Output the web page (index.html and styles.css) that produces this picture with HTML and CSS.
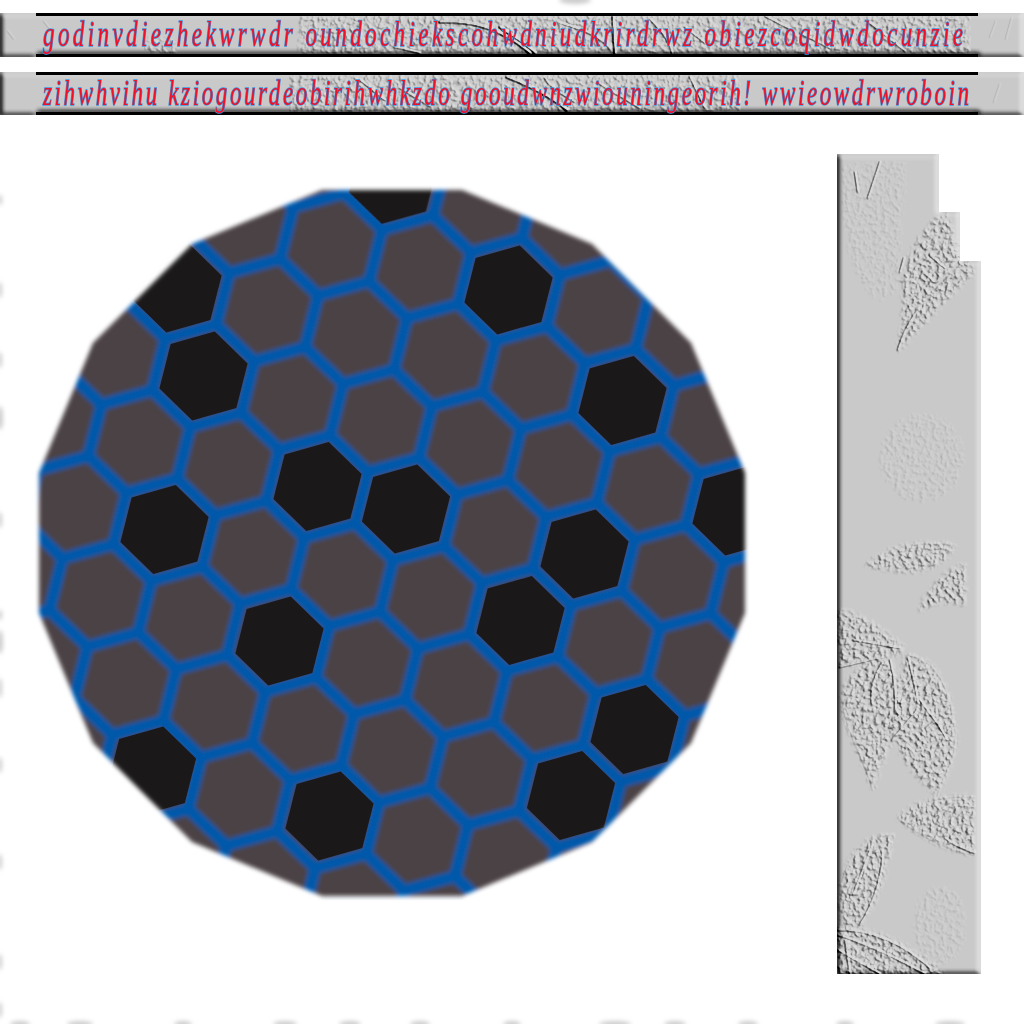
FILE: index.html
```html
<!DOCTYPE html>
<html lang="en">
<head>
<meta charset="utf-8">
<title>Hex panel</title>
<link rel="stylesheet" href="styles.css">
</head>
<body>
<svg class="defs" width="0" height="0" aria-hidden="true">
  <defs>
    <filter id="light" x="-5%" y="-5%" width="110%" height="110%" color-interpolation-filters="sRGB">
      <feGaussianBlur in="SourceAlpha" stdDeviation="0.7" result="h"/>
      <feDiffuseLighting in="h" surfaceScale="5" diffuseConstant="1.03" lighting-color="#ffffff">
        <feDistantLight azimuth="330" elevation="50"/>
      </feDiffuseLighting>
      <feComponentTransfer>
        <feFuncR type="table" tableValues="0 0.2 0.4 0.6 0.8 0.87"/>
        <feFuncG type="table" tableValues="0 0.2 0.4 0.6 0.8 0.87"/>
        <feFuncB type="table" tableValues="0 0.2 0.4 0.6 0.8 0.87"/>
      </feComponentTransfer>
    </filter>
    <filter id="edge" x="-5%" y="-5%" width="110%" height="110%">
      <feGaussianBlur stdDeviation="2.4"/>
    </filter>
    <filter id="bump" x="0" y="0" width="100%" height="100%" color-interpolation-filters="sRGB">
      <feGaussianBlur in="SourceAlpha" stdDeviation="2.5" result="m"/>
      <feTurbulence type="fractalNoise" baseFrequency="0.24" numOctaves="2" seed="7" result="n"/>
      <feColorMatrix in="n" type="matrix" values="0 0 0 0 0  0 0 0 0 0  0 0 0 0 0  0 0 0 2.6 -1.1" result="a"/>
      <feComposite in="a" in2="m" operator="in"/>
    </filter>
    <filter id="soft" x="-2%" y="-2%" width="104%" height="104%">
      <feGaussianBlur stdDeviation="2.2"/>
    </filter>
    <filter id="rim" x="-2%" y="-2%" width="104%" height="104%">
      <feGaussianBlur stdDeviation="2.2"/>
    </filter>
    <filter id="smudge" x="-5%" y="-5%" width="110%" height="110%">
      <feGaussianBlur stdDeviation="2"/>
    </filter>
    <pattern id="comb" patternUnits="userSpaceOnUse" width="91.7" height="158.8" patternTransform="translate(406 509) rotate(14.2)">
      <rect class="comb-line" width="91.7" height="158.8"/>
      <polygon id="cell" class="comb-cell" points="0,-45.8 39.66,-22.9 39.66,22.9 0,45.8 -39.66,22.9 -39.66,-22.9"/>
      <use href="#cell" x="91.7"/>
      <use href="#cell" y="158.8"/>
      <use href="#cell" x="91.7" y="158.8"/>
      <use href="#cell" x="45.85" y="79.4"/>
    </pattern>
    <polygon id="dark" class="comb-dark" transform="rotate(14.2)" points="0,-45.8 39.66,-22.9 39.66,22.9 0,45.8 -39.66,22.9 -39.66,-22.9"/>
    <mask id="disc" maskUnits="userSpaceOnUse" x="0" y="154" width="837" height="820">
      <polygon class="disc-shape" filter="url(#rim)" points="322,190 462,190 592,244 691,343 745,473 745,613 691,743 592,842 462,896 322,896 192,842 93,743 39,613 39,473 93,343 192,244"/>
    </mask>
    <clipPath id="steps">
      <polygon points="837,154 939,154 939,212 960,212 960,261 981,261 981,974 837,974"/>
    </clipPath>
  </defs>
</svg>

<svg class="smudges" viewBox="0 0 1024 1024" aria-hidden="true">
  <g filter="url(#smudge)">
    <ellipse cx="575" cy="0" rx="16" ry="4"/>
    <ellipse cx="0" cy="200" rx="2" ry="5"/><ellipse cx="0" cy="290" rx="2" ry="8"/><ellipse cx="0" cy="360" rx="2" ry="8"/>
    <ellipse cx="0" cy="418" rx="3" ry="12"/><ellipse cx="0" cy="520" rx="2" ry="8"/><ellipse cx="0" cy="615" rx="2" ry="5"/>
    <ellipse cx="0" cy="642" rx="3" ry="12"/><ellipse cx="0" cy="688" rx="2" ry="10"/><ellipse cx="0" cy="765" rx="2" ry="8"/>
    <ellipse cx="0" cy="862" rx="2" ry="8"/><ellipse cx="0" cy="962" rx="2" ry="8"/><ellipse cx="0" cy="1010" rx="2" ry="8"/>
    <ellipse cx="20" cy="1024" rx="10" ry="3"/><ellipse cx="80" cy="1024" rx="13" ry="3"/><ellipse cx="183" cy="1024" rx="9" ry="3"/>
    <ellipse cx="285" cy="1024" rx="12" ry="3"/><ellipse cx="350" cy="1024" rx="11" ry="3"/><ellipse cx="420" cy="1024" rx="10" ry="3"/>
    <ellipse cx="512" cy="1024" rx="9" ry="3"/><ellipse cx="615" cy="1024" rx="16" ry="3"/><ellipse cx="675" cy="1024" rx="11" ry="3"/>
    <ellipse cx="748" cy="1024" rx="10" ry="3"/><ellipse cx="845" cy="1024" rx="9" ry="3"/><ellipse cx="950" cy="1024" rx="15" ry="3"/>
  </g>
</svg>

<header class="bars">
  <section class="bar">
    <svg class="bar-tex" viewBox="0 0 1024 44" aria-hidden="true">
      <g filter="url(#light)">
        <polygon class="relief" filter="url(#edge)" points="0,0 1024,0 1024,44 978,44 978,41 36,41 36,44 0,44"/>
        <g class="bumps bumps-mid" filter="url(#bump)">
          <rect x="300" y="2" width="670" height="38"/>
          <rect x="145" y="26" width="30" height="14"/>
        </g>
        <g class="veins veins-strong">
          <path d="M440 9C470 8 500 14 530 40"/>
          <path d="M500 14C510 22 525 30 535 40"/>
          <path d="M613 4L615 40"/>
        </g>
        <g class="veins">
          <path d="M685 14L705 30"/>
          <path d="M650 6C660 16 670 28 672 40"/>
          <path d="M560 10C580 16 600 22 610 36"/>
          <path d="M395 34L420 40"/>
          <path d="M765 3L790 16M800 20L830 35M870 10L905 38"/>
        </g>
        <g class="veins veins-faint">
          <path d="M996 8L990 24M1012 4L1006 26M8 18L14 26M44 8L50 16"/>
        </g>
      </g>
    </svg>
    <p class="bar-text bar-text-a"><span class="bar-line">godinvdiezhekwrwdr oundochiekscohwdniudkrirdrwz obiezcoqidwdocunzie</span></p>
  </section>
  <section class="bar bar-lower">
    <svg class="bar-tex" viewBox="0 0 1024 43" aria-hidden="true">
      <g filter="url(#light)">
        <polygon class="relief" filter="url(#edge)" points="0,0 1024,0 1024,43 978,43 978,40 36,40 36,43 0,43"/>
        <g class="bumps bumps-mid" filter="url(#bump)">
          <rect x="290" y="2" width="450" height="37"/>
        </g>
        <g class="veins veins-strong">
          <path d="M507 5C530 14 550 24 567 38"/>
        </g>
        <g class="veins">
          <path d="M545 6C550 16 565 24 575 30"/>
          <path d="M360 8L385 28M400 16L430 34"/>
          <path d="M600 12L640 36M690 5L705 36"/>
        </g>
        <g class="veins veins-faint">
          <path d="M1000 12L994 30"/>
        </g>
      </g>
    </svg>
    <p class="bar-text bar-text-b"><span class="bar-line">zihwhvihu kziogourdeobirihwhkzdo gooudwnzwiouningeorih! wwieowdrwroboin</span></p>
  </section>
</header>

<main class="stage">
  <svg class="comb" viewBox="0 154 837 820" role="img" aria-label="Honeycomb disc">
    <rect class="under-glow" x="322" y="896" width="140" height="3" filter="url(#soft)"/>
    <g mask="url(#disc)">
      <rect x="20" y="170" width="745" height="746" fill="url(#comb)" filter="url(#soft)"/>
      <use href="#dark" x="393" y="179.5"/>
      <use href="#dark" x="177.5" y="288"/>
      <use href="#dark" x="508.5" y="290"/>
      <use href="#dark" x="203.5" y="376"/>
      <use href="#dark" x="622.5" y="400.5"/>
      <use href="#dark" x="317.5" y="486.5"/>
      <use href="#dark" x="406" y="509"/>
      <use href="#dark" x="164.5" y="529.5"/>
      <use href="#dark" x="736.5" y="511"/>
      <use href="#dark" x="584.5" y="554"/>
      <use href="#dark" x="279.5" y="641"/>
      <use href="#dark" x="520.5" y="620.5"/>
      <use href="#dark" x="634.5" y="729.5"/>
      <use href="#dark" x="152" y="771"/>
      <use href="#dark" x="329.5" y="816"/>
      <use href="#dark" x="571" y="795.5"/>
    </g>
  </svg>
  <svg class="slab" viewBox="837 154 144 820" role="img" aria-label="Embossed leaf panel">
    <g clip-path="url(#steps)">
      <g filter="url(#light)">
        <polygon class="relief" filter="url(#edge)" points="837,154 939,154 939,212 960,212 960,261 981,261 981,974 837,974"/>
        <g class="bumps bumps-faint" filter="url(#bump)">
          <path d="M842 165L905 160L900 250C905 290 890 300 880 300C860 290 842 260 842 165Z"/>
          <ellipse cx="922" cy="458" rx="42" ry="44"/>
          <ellipse cx="940" cy="925" rx="26" ry="40"/>
        </g>
        <g class="bumps" filter="url(#bump)">
          <path d="M898 352C905 322 905 300 902 280C910 250 925 225 945 212C955 235 962 250 975 272C950 295 925 322 898 352Z"/>
          <path d="M865 565C890 545 920 540 955 545C945 565 925 575 895 570Z"/>
          <path d="M920 612C925 590 945 570 965 565L965 605C950 600 935 600 920 612Z"/>
          <path d="M905 650C880 625 860 615 840 610L840 665C860 665 885 660 905 650Z"/>
          <path d="M885 657C860 665 842 680 843 700C845 730 865 760 873 790C880 760 895 735 900 720C905 690 895 665 885 657Z"/>
          <path d="M905 655C930 655 950 680 955 730C958 760 945 770 938 795C920 780 900 760 893 730C890 700 905 680 905 655Z"/>
          <path d="M898 818C915 800 945 795 975 797L975 855C950 850 925 840 898 818Z"/>
          <path d="M894 835C870 832 850 850 843 880C840 900 842 920 845 930L860 925C880 900 885 870 894 835Z"/>
          <path d="M838 928C870 925 910 945 945 974L838 974Z"/>
        </g>
        <g class="veins">
          <path d="M855 172L858 192M880 162L868 198"/>
          <path d="M898 350C902 335 908 325 916 312"/>
          <path d="M904 258L900 272M930 256L945 268M925 274L934 282"/>
          <path d="M882 663C875 675 870 690 872 703"/>
          <path d="M890 660C895 680 896 695 895 713"/>
          <path d="M908 657C912 675 916 690 918 703"/>
          <path d="M920 700C930 715 940 725 947 740"/>
          <path d="M892 740L917 710"/>
          <path d="M840 667L883 657M853 640L900 648"/>
          <path d="M945 838C955 846 965 850 975 853"/>
          <path d="M872 845L853 895M882 850C884 870 875 900 860 925"/>
          <path d="M838 935C870 945 900 960 925 974M838 950L880 974M838 930C880 930 910 950 930 968M845 940L850 974"/>
        </g>
        <g class="veins veins-faint">
          <path d="M865 565C890 545 920 540 955 545M920 612C925 590 945 570 965 565"/>
          <path d="M873 790C865 760 845 730 843 700M938 795C945 770 958 760 955 730C950 680 930 655 905 655"/>
          <path d="M898 818C915 800 945 795 975 797M898 818C925 840 950 850 975 855"/>
          <path d="M894 835C870 832 850 850 843 880"/>
        </g>
      </g>
    </g>
  </svg>
</main>
</body>
</html>
```

FILE: styles.css
```css
html, body {
  margin: 0;
  padding: 0;
  background: #ffffff;
}

body {
  position: relative;
  width: 1024px;
  height: 1024px;
  overflow: hidden;
}

.defs {
  position: absolute;
}

.smudges {
  position: absolute;
  left: 0;
  top: 0;
  width: 1024px;
  height: 1024px;
  fill: #cccccc;
}

.bars {
  position: relative;
  display: flex;
  flex-direction: column;
  gap: 15px;
  padding-top: 13px;
}

.bar {
  position: relative;
  height: 44px;
}

.bar-lower {
  height: 43px;
}

.bar-tex {
  position: absolute;
  left: 0;
  top: 0;
  width: 1024px;
  height: 100%;
  display: block;
}

.relief {
  fill: #000000;
  fill-opacity: 0.6;
}

.bumps {
  fill: #000000;
  fill-opacity: 0.42;
}

.bumps-mid {
  fill-opacity: 0.3;
}

.bumps-faint {
  fill-opacity: 0.08;
}

.veins {
  fill: none;
  stroke: #000000;
  stroke-width: 1.5;
  stroke-opacity: 0.3;
  stroke-linecap: round;
}

.veins-strong {
  stroke-width: 2.4;
  stroke-opacity: 0.5;
}

.veins-faint {
  stroke-width: 1;
  stroke-opacity: 0.08;
}

.bar-text {
  position: relative;
  box-sizing: border-box;
  margin: 0 46px 0 36px;
  height: 100%;
  padding-left: 7px;
  border-top: 3px solid #000000;
  border-bottom: 3px solid #000000;
  font-family: "Liberation Serif", serif;
  font-style: italic;
  font-size: 23px;
  line-height: 38px;
  white-space: nowrap;
  color: #f01028;
  -webkit-text-stroke: 1px #3a98e2;
  paint-order: stroke fill;
}

.bar-line {
  display: inline-block;
  transform: scaleY(1.55);
}

.bar-text-a {
  letter-spacing: 3.42px;
}

.bar-text-b {
  line-height: 37px;
  letter-spacing: 2.62px;
}

.stage {
  display: flex;
  margin-top: 39px;
}

.comb {
  display: block;
  width: 837px;
  height: 820px;
}

.slab {
  display: block;
  width: 144px;
  height: 820px;
}

.comb-line {
  fill: #0358aa;
}

.comb-cell {
  fill: #4c4345;
}

.comb-dark {
  fill: #1a1819;
}

.disc-shape {
  fill: #ffffff;
}

.under-glow {
  fill: #e4edf6;
}
```
